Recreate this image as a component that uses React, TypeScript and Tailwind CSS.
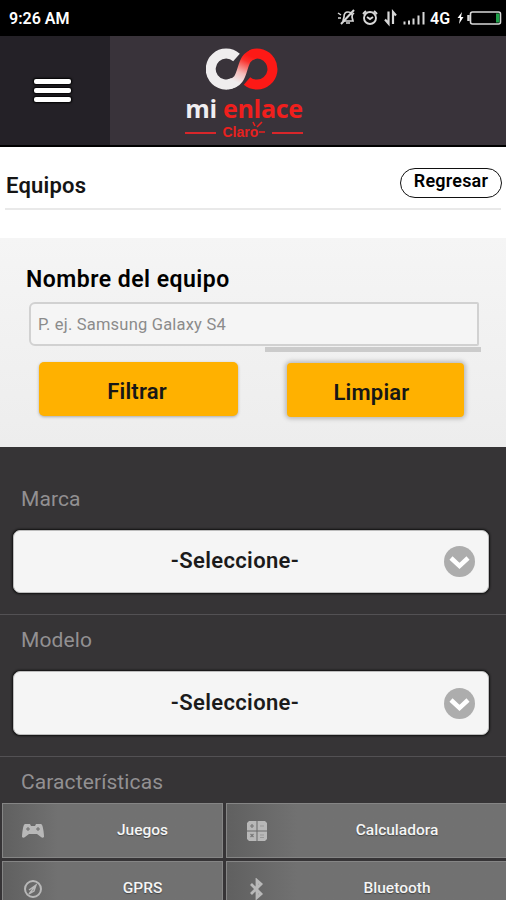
import type { ReactNode } from "react";

const StatusIcons = () => (
  <svg className="absolute left-0 top-0" width="506" height="36" viewBox="0 0 506 36" fill="none" stroke="#d8d8d8">
    {/* silent */}
    <path d="M344 21h9l-1-4c1-3-1-5-4-5s-4 2-4 5l-1 4 M346 23h4" strokeWidth="1.7" />
    <path d="M341 24l13-14" strokeWidth="2" />
    <path d="M338 13l3 2 M338 18h3 M352 15l2-2" strokeWidth="1.5" />
    {/* alarm */}
    <circle cx="370" cy="18" r="6" strokeWidth="1.9" />
    <path d="M363 14l3-3 M377 14l-3-3 M367 17l3 2 3-2" strokeWidth="2" />
    {/* data arrows */}
    <path d="M388.5 11.5v12l-3.5-4 M393 24V12l3 3.5" strokeWidth="2.2" />
    {/* signal */}
    <path d="M404.5 24.5v-3 M409 24.5v-4 M413.5 24.5v-6 M418.5 24.5v-9 M423.5 24.5V12" strokeWidth="2" />
    {/* battery */}
    <path d="M462 12l-4.5 6h2.5l-1 6 4.5-7H461z" fill="#fff" stroke="none" />
    <rect x="470.5" y="12" width="30" height="12" rx="2" strokeWidth="1.6" />
    <path d="M468.5 15v6" strokeWidth="2.5" />
    <rect x="496" y="13.5" width="3.5" height="9" fill="#1fa04a" stroke="none" />
  </svg>
);

const Logo = () => (
  <div className="flex w-[118px] flex-col items-center">
    <svg className="-ml-[5px]" width="72" height="42" viewBox="0 0 72 42" fill="none" strokeWidth="10">
      <defs>
        <linearGradient id="crossing" x1="30" y1="34" x2="42" y2="7" gradientUnits="userSpaceOnUse">
          <stop offset="0" stopColor="#efedee" />
          <stop offset="0.35" stopColor="#f4bbb8" />
          <stop offset="0.8" stopColor="#fb302b" />
          <stop offset="1" stopColor="#fd1916" />
        </linearGradient>
      </defs>
      <path d="M30.5 9.5A15.5 15.5 0 1 0 28 34.5" stroke="#efedee" />
      <path d="M41 33A15.5 15.5 0 1 0 45 6.8" stroke="#fd1916" />
      <path d="M22 36.2C42 35 31 8 50 5.9" stroke="url(#crossing)" />
    </svg>
    <p className="mt-[4px] whitespace-nowrap font-['Open_Sans'] text-[25px] font-bold leading-[28px] tracking-[-0.3px] text-[#f01f1d]">
      <span className="text-[#f0eef1]">mi</span> enlace
    </p>
    <div className="flex w-full items-center justify-between pt-[4px] text-[#e8211f]">
      <div className="h-[2px] w-[31px] bg-[#d8262a]"></div>
      <div className="flex h-[13px] w-[43px] items-center">
        <span className="font-['Liberation_Sans'] text-[14px] font-bold leading-[13px]">Claro</span>
        <svg className="-ml-[7px] -mt-2.5 shrink-0" width="14" height="14" viewBox="0 0 14 14" stroke="currentColor" strokeWidth="1.6">
          <path d="M4 5L2 1 M6 6l5-5 M8 11h6" />
        </svg>
      </div>
      <div className="h-[2px] w-[31px] bg-[#d8262a]"></div>
    </div>
  </div>
);

const SelectField = ({ label, first }: { label: string; first?: boolean }) => (
  <div
    className={
      first
        ? "h-[168px] border-b border-[#535154] pt-[37px]"
        : "h-[142px] border-b border-[#535154] pt-[10px]"
    }
  >
    <p className="pl-[21px] text-[21px] leading-[30px] tracking-[0.1px] text-[#929092]">{label}</p>
    <button
      className={
        first
          ? "ml-[13px] mt-[16px] grid h-[63px] w-[476px] grid-cols-[1fr_auto_1fr] items-center rounded-[7px] border border-[#bdbdbd] bg-[#f5f5f5] shadow-[0_0_2px_1px_#111]"
          : "ml-[13px] mt-[16px] grid h-[64px] w-[476px] grid-cols-[1fr_auto_1fr] items-center rounded-[7px] border border-[#bdbdbd] bg-[#f5f5f5] shadow-[0_0_2px_1px_#111]"
      }
    >
      <span></span>
      <span className="-translate-x-[16px] -translate-y-px text-[22px] font-semibold tracking-[0.35px] text-[#1b1b1b]">-Seleccione-</span>
      <svg className="mr-3 justify-self-end" width="33" height="33" viewBox="0 0 33 33">
        <circle cx="16.5" cy="16.5" r="15.5" fill="#adadad" />
        <path d="M8 13l8.5 8L25 13" fill="none" stroke="#fff" strokeWidth="4.5" />
      </svg>
    </button>
  </div>
);

const Feature = ({ label, children }: { label: string; children: ReactNode }) => (
  <div className="flex h-[55px] items-center border border-[#858585] bg-linear-to-r from-[#606060] from-0% to-[#717171] to-25%">
    <div className="flex w-[60px] shrink-0 justify-center text-[#b8b8b8]">{children}</div>
    <p className="flex-1 text-center text-[15.5px] font-medium text-[#f5f5f5] [text-shadow:0_1px_1px_#444]">{label}</p>
  </div>
);

const App = () => {
  return (
    <div className="h-[900px] w-[506px] overflow-hidden bg-[#363436] font-[Roboto,sans-serif]">
      <div className="relative h-9 bg-black text-white">
        <p className="pl-[9px] pt-px text-[16px] font-semibold leading-9">9:26 AM</p>
        <StatusIcons />
        <span className="absolute left-[430px] top-[7px] text-[16px] font-semibold leading-6">4G</span>
      </div>

      <header className="flex h-[111px] border-b-2 border-black bg-[#39333a]">
        <button className="flex w-[110px] flex-col items-center justify-center gap-1 bg-[#242127] pr-1.5">
          <span className="h-[5px] w-[37px] rounded-xs bg-white shadow-[0_0_2px_1px_#000]"></span>
          <span className="h-[5px] w-[37px] rounded-xs bg-white shadow-[0_0_2px_1px_#000]"></span>
          <span className="h-[5px] w-[37px] rounded-xs bg-white shadow-[0_0_2px_1px_#000]"></span>
        </button>
        <div className="pl-[75px] pt-3">
          <Logo />
        </div>
      </header>

      <div className="h-[91px] bg-white px-[5px]">
        <div className="flex h-[63px] justify-between border-b-2 border-[#e9e9e9]">
          <h1 className="pl-px pt-6 text-[22px] font-semibold leading-[30px] tracking-[0.2px] text-[#151515]">Equipos</h1>
          <button className="-mr-px mt-[21px] h-[30px] w-[102px] rounded-full border-[1.5px] border-[#111] pb-1 text-[18px] font-semibold leading-6 tracking-[0.2px] text-black">
            Regresar
          </button>
        </div>
      </div>

      <section className="h-[209px] bg-linear-to-b from-[#f5f5f5] to-[#ededed] pt-[27px]">
        <h2 className="pl-[26px] text-[23px] font-semibold leading-[30px] tracking-[0.48px] text-black">Nombre del equipo</h2>
        <input
          className="ml-[29px] mt-[7px] block h-[44px] w-[450px] rounded-l-md rounded-r-xs border-2 border-[#d1d1d1] bg-[#f5f5f5] px-[7px] text-[16.5px] tracking-[0.2px] placeholder:text-[#8b8b8b]"
          placeholder="P. ej. Samsung Galaxy S4"
        />
        <div className="ml-[265px] mt-px h-[5px] w-[216px] bg-[#cbcbcb]"></div>
        <div className="flex items-start pl-[39px] pt-[10px] text-[22px] font-semibold tracking-[0.2px] text-[#171717] [text-shadow:0_1px_1px_#d8d8d8]">
          <button className="h-[54px] w-[199px] rounded-[5px] bg-[#ffb100] pr-[3px] pt-1 shadow-[0_1px_3px_#aaa]">Filtrar</button>
          <button className="ml-[49px] mt-px h-[54px] w-[177px] rounded-[4px] bg-[#ffb100] pr-2 pt-1 shadow-[0_0_4px_2px_#bbb]">
            Limpiar
          </button>
        </div>
      </section>

      <SelectField label="Marca" first />
      <SelectField label="Modelo" />

      <p className="h-[46px] pl-[21px] pt-[10px] text-[21px] leading-[30px] tracking-[0.1px] text-[#929092]">Características</p>
      <div className="grid grid-cols-[221px_282px] gap-x-[3px] gap-y-[3px] pl-0.5">
        <Feature label="Juegos">
          <svg width="22" height="16" viewBox="0 0 22 16" fill="currentColor">
            <path d="M3 1h5l1 2h4l1-2h5c2 0 3 10 3 13-1 1-2 1-3 0l-4-3H7l-4 3c-1 1-2 1-3 0C0 11 1 1 3 1z" />
            <path d="M6 4v4M4 6h4M14 6h4M16 4v4" stroke="#6b6b6b" />
          </svg>
        </Feature>
        <Feature label="Calculadora">
          <svg width="20" height="20" viewBox="0 0 20 20" fill="currentColor">
            <path d="M2 0h7.500v9.500H0V2zM10.500 0H18l2 2v7.500h-9.500zM0 10.500h9.500V20H2l-2-2zM10.500 10.500H20V18l-2 2h-7.500z" />
            <path d="M3 5h4M5 3v4M3.500 13l3 3M6.500 13l-3 3" stroke="#777" strokeWidth="1.2" />
            <path d="M13 5h4M13 14h4M13 16.500h4" stroke="#999" strokeWidth="1" />
          </svg>
        </Feature>
        <Feature label="GPRS">
          <svg width="20" height="20" viewBox="0 0 20 20" fill="none" stroke="currentColor" strokeWidth="2">
            <circle cx="10" cy="10" r="8" />
            <path d="M6 11l7-5-2 6-5 3 7-9" strokeWidth="1.4" />
          </svg>
        </Feature>
        <Feature label="Bluetooth">
          <svg width="16" height="22" viewBox="0 0 16 22" fill="none" stroke="currentColor" strokeWidth="2.8">
            <path d="M2 6l10 10-4 3.500v-17L12 6 2 16" />
          </svg>
        </Feature>
      </div>
    </div>
  );
};

export default App;
